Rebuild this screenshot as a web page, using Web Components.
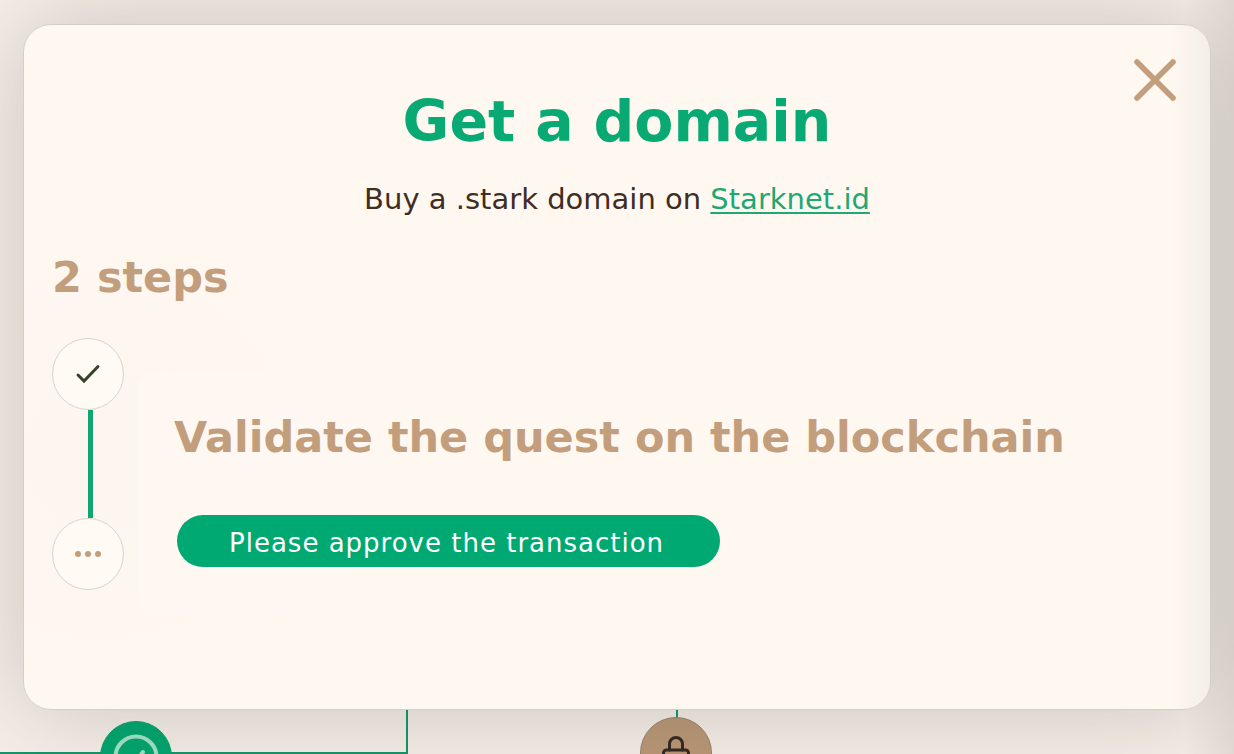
<!DOCTYPE html>
<html lang="en">
<head>
<meta charset="utf-8">
<meta name="viewport" content="width=device-width, initial-scale=1">
<title>Get a domain</title>
<style>
  html, body { margin: 0; height: 100%; }
  body { overflow: hidden; background: #f5ece6; font-family: Verdana, "DejaVu Sans", sans-serif; color: #402d24; }
</style>
</head>
<body>
<quest-page></quest-page>
<script>
class BaseElement extends HTMLElement {
  connectedCallback() {
    if (this.shadowRoot) return;
    this.attachShadow({ mode: 'open' }).innerHTML = this.constructor.markup;
  }
}

/* Quest map behind the dialog: nodes joined by lines on a free canvas */
customElements.define('quest-node', class extends BaseElement {
  static markup = `
    <style>
      :host { position: absolute; box-sizing: border-box; width: 72px; height: 72px; border-radius: 50%;
        display: grid; place-items: center; background: var(--node, #00a56e); border: 1px solid var(--edge, #009e69); }
    </style><slot></slot>`;
});

customElements.define('quest-map', class extends BaseElement {
  static markup = `
    <style>
      :host { position: absolute; inset: 0; overflow: hidden; }
      .line { position: absolute; background: #159468; }
      .across { left: 0; top: 752px; width: 408px; height: 2px; }
      .down { left: 406px; top: 600px; width: 2px; height: 154px; }
      .short { left: 676px; top: 600px; width: 2px; height: 120px; }
      .done { left: 100px; top: 721px; }
      .locked { left: 640px; top: 717px; --node: #ba9776; --edge: #98806a; }
      svg { display: block; }
    </style>
    <div class="line across"></div>
    <div class="line down"></div>
    <div class="line short"></div>
    <quest-node class="done">
      <svg width="46" height="46" viewBox="0 0 46 46" fill="none" stroke="#a3e2c9" stroke-width="4" stroke-linecap="round" stroke-linejoin="round" aria-hidden="true"><circle cx="23" cy="23" r="20.500"/><path d="M15 24l6 6 9-12"/></svg>
    </quest-node>
    <quest-node class="locked">
      <svg width="32" height="36" viewBox="0 0 32 36" fill="none" stroke="#342721" stroke-width="3" stroke-linecap="round" aria-hidden="true"><rect x="3.500" y="15" width="25" height="19" rx="3"/><path d="M9.500 15V9a6.500 6.500 0 0 1 13 0v6"/></svg>
    </quest-node>`;
});

customElements.define('close-button', class extends BaseElement {
  static markup = `
    <style>
      :host { display: block; }
      button { display: block; padding: 0; border: 0; background: none; color: #c39e7c; cursor: pointer; }
      svg { display: block; }
    </style>
    <button type="button" aria-label="Close">
      <svg width="44" height="44" viewBox="0 0 44 44" fill="none" stroke="currentColor" stroke-width="5.600" stroke-linecap="round"><path d="M4 4l36 36M40 4L4 40"/></svg>
    </button>`;
});

customElements.define('step-dot', class extends BaseElement {
  static markup = `
    <style>
      :host { display: grid; place-items: center; box-sizing: border-box; width: 72px; height: 72px;
        border-radius: 50%; border: 1px solid #d9d3cf; background: #fffaf4; }
    </style><slot></slot>`;
});

customElements.define('step-track', class extends BaseElement {
  static markup = `
    <style>
      :host { display: flex; flex-direction: column; align-items: center; }
      .bar { width: 5px; height: 108px; margin-left: 5px; background: #0fa672; }
      svg { display: block; }
    </style>
    <step-dot><svg width="26" height="20" viewBox="0 0 26 20" fill="none" stroke="#35432a" stroke-width="3" stroke-linecap="round" stroke-linejoin="miter" role="img" aria-label="Done"><path d="M3 11l6 6L23 2.500"/></svg></step-dot>
    <div class="bar"></div>
    <step-dot><svg width="26" height="6" viewBox="0 0 26 6" fill="#c39e7c" role="img" aria-label="In progress"><circle cx="3" cy="3" r="3"/><circle cx="13" cy="3" r="3"/><circle cx="23" cy="3" r="3"/></svg></step-dot>`;
});

customElements.define('step-panel', class extends BaseElement {
  static markup = `
    <style>
      :host { display: block; box-sizing: border-box; padding: 38px 36px 49px; border-radius: 16px; background: linear-gradient(90deg, #fff8f2, #fff8f100 60%); }
      h3 { margin: 0; font-size: 43px; line-height: 54px; font-weight: 700; color: #c39e7c; }
      button { display: block; box-sizing: border-box; height: 52px; margin: 51px 0 0 3px; padding: 3px 56px 0 52px; border: 0; border-radius: 26px; background: #00a972;
        color: #fff; font: inherit; font-size: 26px; line-height: 32px; letter-spacing: 1px; cursor: pointer; }
    </style>
    <h3><slot name="title"></slot></h3>
    <button type="button"><slot></slot></button>`;
});

customElements.define('quest-dialog', class extends BaseElement {
  static markup = `
    <style>
      :host { position: absolute; inset: 24px 23px auto; box-sizing: border-box; padding: 60px 28px 93px;
        border: 1px solid #d3cec9; border-radius: 28px;
        background: linear-gradient(90deg, transparent calc(100% - 40px), #f3eee8 100%), radial-gradient(circle at 80px 430px, #fdf5ef, #fff8f1 280px);
        box-shadow: 0 0 100px rgba(60, 76, 66, .26); }
      header { text-align: center; }
      h1 { margin: 0; font-size: 57px; line-height: 72px; font-weight: 700; color: #09a974; }
      p { margin: 24px 0 0; font-size: 29px; line-height: 36px; }
      a { color: #1fa873; text-decoration-thickness: 2px; text-underline-offset: 3px; }
      h2 { margin: 33px 0 0; font-size: 43px; line-height: 54px; font-weight: 700; color: #c39e7c; }
      .steps { display: grid; grid-template-columns: auto 1fr; column-gap: 14px; margin-top: 34px; align-items: start; }
      step-panel { margin-top: 34px; }
      close-button { position: absolute; top: 33px; right: 33px; }
    </style>
    <header>
      <h1>Get a domain</h1>
      <p>Buy a .stark domain on <a href="#starknet">Starknet.id</a></p>
    </header>
    <h2>2 steps</h2>
    <div class="steps">
      <step-track></step-track>
      <step-panel><span slot="title">Validate the quest on the blockchain</span>Please approve the transaction</step-panel>
    </div>
    <close-button></close-button>`;
});

customElements.define('quest-page', class extends BaseElement {
  static markup = `
    <style>
      :host { display: block; position: relative; min-height: 100vh; overflow: hidden; background: linear-gradient(90deg, transparent calc(100% - 50px), rgba(100, 100, 90, .14)), #f7eee8; }
    </style>
    <quest-map></quest-map>
    <quest-dialog role="dialog" aria-label="Get a domain"></quest-dialog>`;
});
</script>
</body>
</html>
